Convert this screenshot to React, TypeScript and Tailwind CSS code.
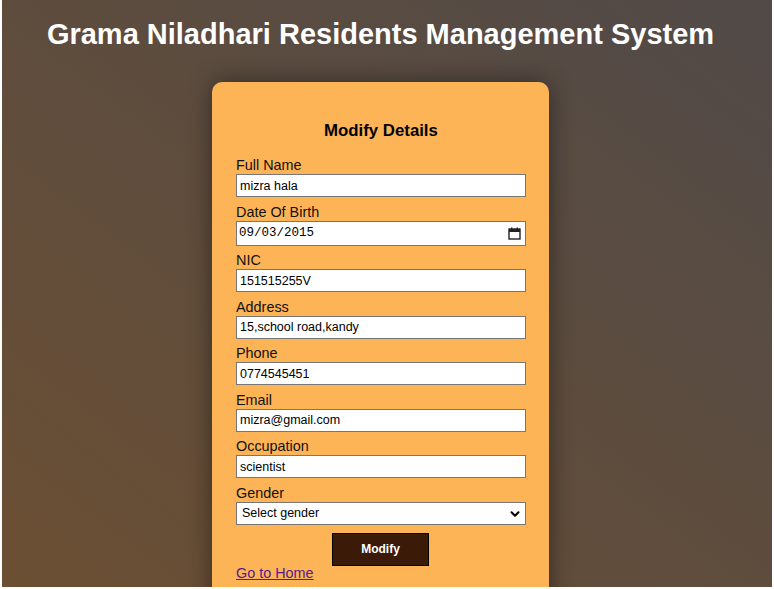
import { ChevronDown } from "lucide-react";

const fields = [
  { label: "Full Name", value: "mizra hala" },
  { label: "Date Of Birth", value: "2015-09-03", type: "date" },
  { label: "NIC", value: "151515255V" },
  { label: "Address", value: "15,school road,kandy" },
  { label: "Phone", value: "0774545451" },
  { label: "Email", value: "mizra@gmail.com" },
  { label: "Occupation", value: "scientist" },
];

const App = () => {
  return (
    <div className="bg-white pl-[2px] pr-[2px] pb-[2px] font-['Liberation_Sans',Arial,sans-serif]">
      <div className="h-[587px] bg-[linear-gradient(to_top_right,#6b4f33,#514a48)] overflow-hidden">
        <div className="flex flex-col items-center pr-[13px]">
          {/* Page title */}
          <h1 className="mt-[18px] text-[29px] leading-[33px] font-bold text-white">
            Grama Niladhari Residents Management System
          </h1>
          {/* Form card */}
          <div className="mt-[31px] w-[337px] rounded-[10px] bg-[#fdb457] pt-[38.5px] pl-[24px] pr-[23px] pb-[40px] shadow-[0_0_24px_rgba(0,0,0,0.45)]">
            <h3 className="text-center text-[16.8px] leading-[20px] font-bold text-black">
              Modify Details
            </h3>
            <form className="mt-[16.5px] flex flex-col gap-[6.5px]">
              {fields.map(({ label, value, type }) => (
                <div key={label} className="flex flex-col">
                  <label className="text-[14.4px] leading-[17px] text-[#111]">{label}</label>
                  {type === "date" ? (
                    <div className="relative flex h-[25px] items-center border border-[#767676] bg-white pl-[2px] font-['Liberation_Mono',monospace] text-[12.5px] text-black">
                      09/03/2015
                      <svg
                        className="absolute right-[4px] top-[5px]"
                        width="13"
                        height="13"
                        viewBox="0 0 13 13"
                        fill="none"
                      >
                        <rect x="1" y="2" width="11" height="10" stroke="#222" strokeWidth="1.4" />
                        <rect x="1" y="2" width="11" height="3" fill="#222" />
                        <rect x="3" y="0.5" width="1.4" height="2" fill="#222" />
                        <rect x="8.6" y="0.5" width="1.4" height="2" fill="#222" />
                      </svg>
                    </div>
                  ) : (
                    <input
                      readOnly
                      value={value}
                      className="h-[23px] border border-[#767676] bg-white px-[3px] text-[12.5px] text-black outline-none"
                    />
                  )}
                </div>
              ))}
              <div className="flex flex-col">
                <label className="text-[14.4px] leading-[17px] text-[#111]">Gender</label>
                <div className="relative flex h-[23px] items-center border border-[#767676] bg-white pl-[5px] text-[12.5px] text-black">
                  Select gender
                  <ChevronDown className="absolute right-[3px] top-[4px] h-[14px] w-[14px]" strokeWidth={3.5} />
                </div>
              </div>
            </form>
            <div className="mt-[8px] flex justify-center pr-[1px]">
              <button className="h-[33px] w-[97px] border border-black bg-[#3b1a07] text-[12px] font-bold text-white">
                Modify
              </button>
            </div>
            <a href="#" className="-mt-[1px] block w-fit text-[14.4px] leading-[17px] text-[#551a8b] underline">
              Go to Home
            </a>
          </div>
        </div>
      </div>
    </div>
  );
};

export default App;
